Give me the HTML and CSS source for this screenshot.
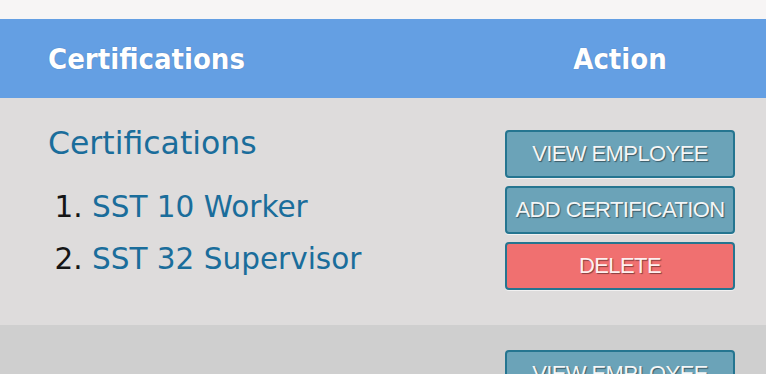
FILE: index.html
```html
<!DOCTYPE html>
<html lang="en">
<head>
<meta charset="utf-8">
<title>Certifications</title>
<link rel="stylesheet" href="styles.css">
</head>
<body>
<div class="page">
  <div class="table">
    <div class="thead">
      <div class="th th-cert">Certifications</div>
      <div class="th th-action">Action</div>
    </div>
    <div class="row row-odd">
      <div class="cell cert-cell">
        <h2 class="cert-title">Certifications</h2>
        <ol class="cert-list">
          <li><span class="cert-name">SST 10 Worker</span></li>
          <li><span class="cert-name">SST 32 Supervisor</span></li>
        </ol>
      </div>
      <div class="cell action-cell">
        <button class="btn btn-info">VIEW EMPLOYEE</button>
        <button class="btn btn-info">ADD CERTIFICATION</button>
        <button class="btn btn-danger">DELETE</button>
      </div>
    </div>
    <div class="row row-even">
      <div class="cell cert-cell"></div>
      <div class="cell action-cell action-cell-2">
        <button class="btn btn-info">VIEW EMPLOYEE</button>
        <button class="btn btn-info">ADD CERTIFICATION</button>
        <button class="btn btn-danger">DELETE</button>
      </div>
    </div>
  </div>
</div>
</body>
</html>
```

FILE: styles.css
```css
html, body {
  margin: 0;
  padding: 0;
}
body {
  background: #f7f5f5;
  font-family: "DejaVu Sans", Verdana, sans-serif;
  overflow: hidden;
}
.page {
  padding-top: 19px;
}
.table {
  display: flex;
  flex-direction: column;
}
.thead,
.row {
  display: grid;
  grid-template-columns: 1fr 230px;
  padding: 0 31px 0 48px;
}
.thead {
  background: #649fe3;
  height: 79px;
  align-items: center;
}
.th {
  font-family: "DejaVu Sans Condensed", "DejaVu Sans", sans-serif;
  font-stretch: condensed;
  font-weight: bold;
  font-size: 29px;
  color: #ffffff;
  text-shadow: 0 0 1px rgba(40, 60, 100, 0.45);
  padding-top: 1px;
}
.th-action {
  text-align: center;
}
.row-odd {
  background: #dedcdc;
  height: 227px;
  box-sizing: border-box;
}
.row-even {
  background: #cfcfcf;
  height: 227px;
  box-sizing: border-box;
}
.cert-cell {
  padding-top: 27px;
}
.cert-title {
  margin: 0 0 19px;
  font-weight: normal;
  font-size: 31.5px;
  line-height: 37px;
  color: #1a6d9b;
}
.cert-list {
  margin: 0;
  padding-left: 44px;
  font-size: 29.5px;
  line-height: 52px;
  color: #151515;
}
.cert-name {
  color: #1a6d9b;
}
.action-cell {
  padding-top: 32px;
  display: flex;
  flex-direction: column;
  gap: 8px;
}
.action-cell-2 {
  padding-top: 25px;
}
.btn {
  display: block;
  width: 230px;
  height: 48px;
  box-sizing: border-box;
  margin: 0;
  padding: 0;
  border: 2px solid #257590;
  border-radius: 4px;
  font-family: "Liberation Sans", Arial, sans-serif;
  font-size: 22px;
  letter-spacing: -0.6px;
  color: #f4f6f7;
  text-shadow: 1px 1px 1px rgba(0, 0, 0, 0.45);
  box-shadow: 0 1px 0 rgba(255, 255, 255, 0.6);
  text-align: center;
  cursor: pointer;
}
.btn-info {
  background: #6ba3b8;
}
.btn-danger {
  background: #f07070;
  color: #fdf0f0;
}
```
